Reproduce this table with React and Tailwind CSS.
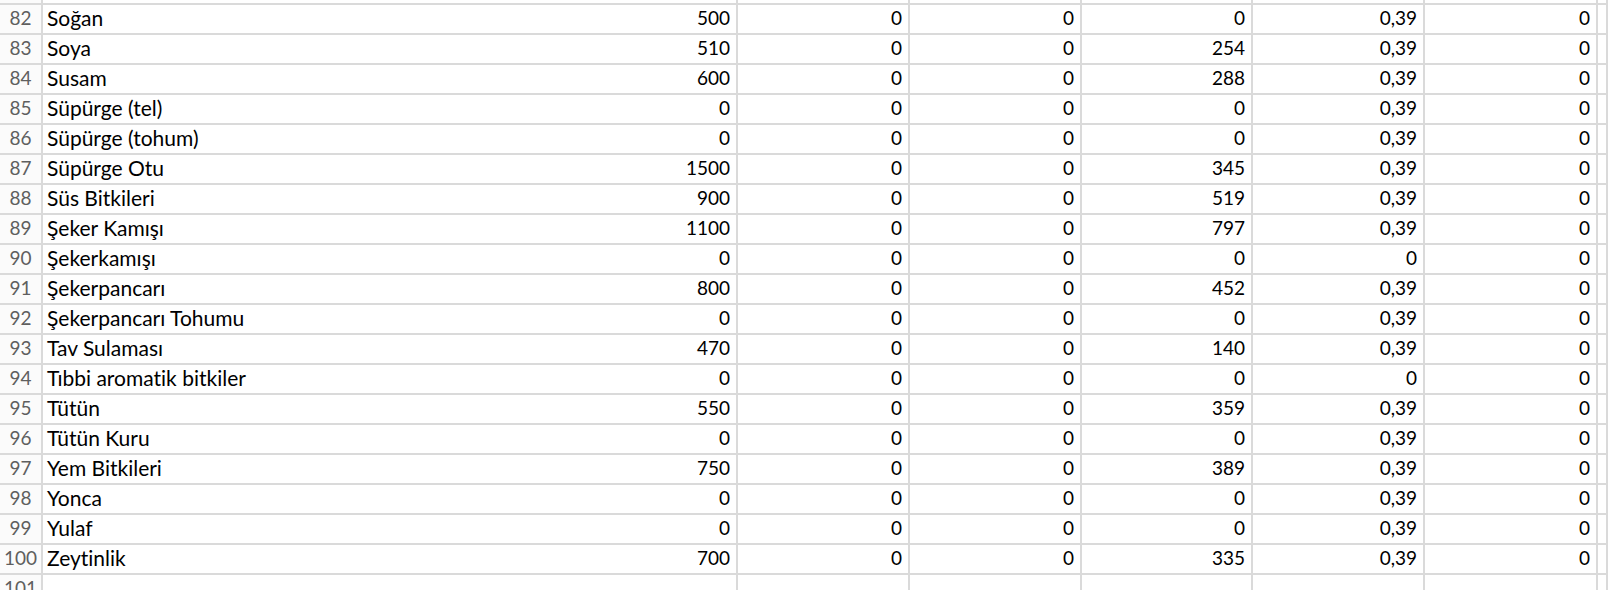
import React from 'react';

// rows visible in the sheet: [row number, name, values...]
const rows = [
  [82, 'Soğan', '500', '0', '0', '0', '0,39', '0'],
  [83, 'Soya', '510', '0', '0', '254', '0,39', '0'],
  [84, 'Susam', '600', '0', '0', '288', '0,39', '0'],
  [85, 'Süpürge (tel)', '0', '0', '0', '0', '0,39', '0'],
  [86, 'Süpürge (tohum)', '0', '0', '0', '0', '0,39', '0'],
  [87, 'Süpürge Otu', '1500', '0', '0', '345', '0,39', '0'],
  [88, 'Süs Bitkileri', '900', '0', '0', '519', '0,39', '0'],
  [89, 'Şeker Kamışı', '1100', '0', '0', '797', '0,39', '0'],
  [90, 'Şekerkamışı', '0', '0', '0', '0', '0', '0'],
  [91, 'Şekerpancarı', '800', '0', '0', '452', '0,39', '0'],
  [92, 'Şekerpancarı Tohumu', '0', '0', '0', '0', '0,39', '0'],
  [93, 'Tav Sulaması', '470', '0', '0', '140', '0,39', '0'],
  [94, 'Tıbbi aromatik bitkiler', '0', '0', '0', '0', '0', '0'],
  [95, 'Tütün', '550', '0', '0', '359', '0,39', '0'],
  [96, 'Tütün Kuru', '0', '0', '0', '0', '0,39', '0'],
  [97, 'Yem Bitkileri', '750', '0', '0', '389', '0,39', '0'],
  [98, 'Yonca', '0', '0', '0', '0', '0,39', '0'],
  [99, 'Yulaf', '0', '0', '0', '0', '0,39', '0'],
  [100, 'Zeytinlik', '700', '0', '0', '335', '0,39', '0'],
];

const cols = 'grid grid-cols-[43px_695px_172px_172px_171px_172px_173px_1fr] h-[30px]';
const cell = 'border-r-2 border-b-2 border-[#dadada] h-[30px] flex items-end pb-[3px] leading-[24px] overflow-hidden whitespace-nowrap';

function Row({ data, first }) {
  const [num, name, lead, ...vals] = data;
  return (
    <div className={`${cols} ${first ? 'mt-[-25px]' : ''}`}>
      <div className={`${cell} justify-center bg-[#fbfbfb] text-[#5f5f5f]`}>{num}</div>
      <div className={`${cell} justify-between pl-[4px] pr-[6px] text-black`}>
        <span className="text-[21px]">{name}</span>
        <span>{lead}</span>
      </div>
      {vals.map((v, i) => (
        <div key={i} className={`${cell} justify-end pr-[6px] text-black`}>{v}</div>
      ))}
      <div className={cell}></div>
    </div>
  );
}

export default function App() {
  return (
    <div className="w-[1608px] h-[590px] overflow-hidden bg-white text-[19px] font-['Lato','Open_Sans',sans-serif] [font-variant-ligatures:none]">
      <Row data={[81, '', '', '', '', '', '0,39', '']} first />
      {rows.map((r) => (
        <Row key={r[0]} data={r} />
      ))}
      <Row data={[101, '', '', '', '', '', '', '']} />
    </div>
  );
}
